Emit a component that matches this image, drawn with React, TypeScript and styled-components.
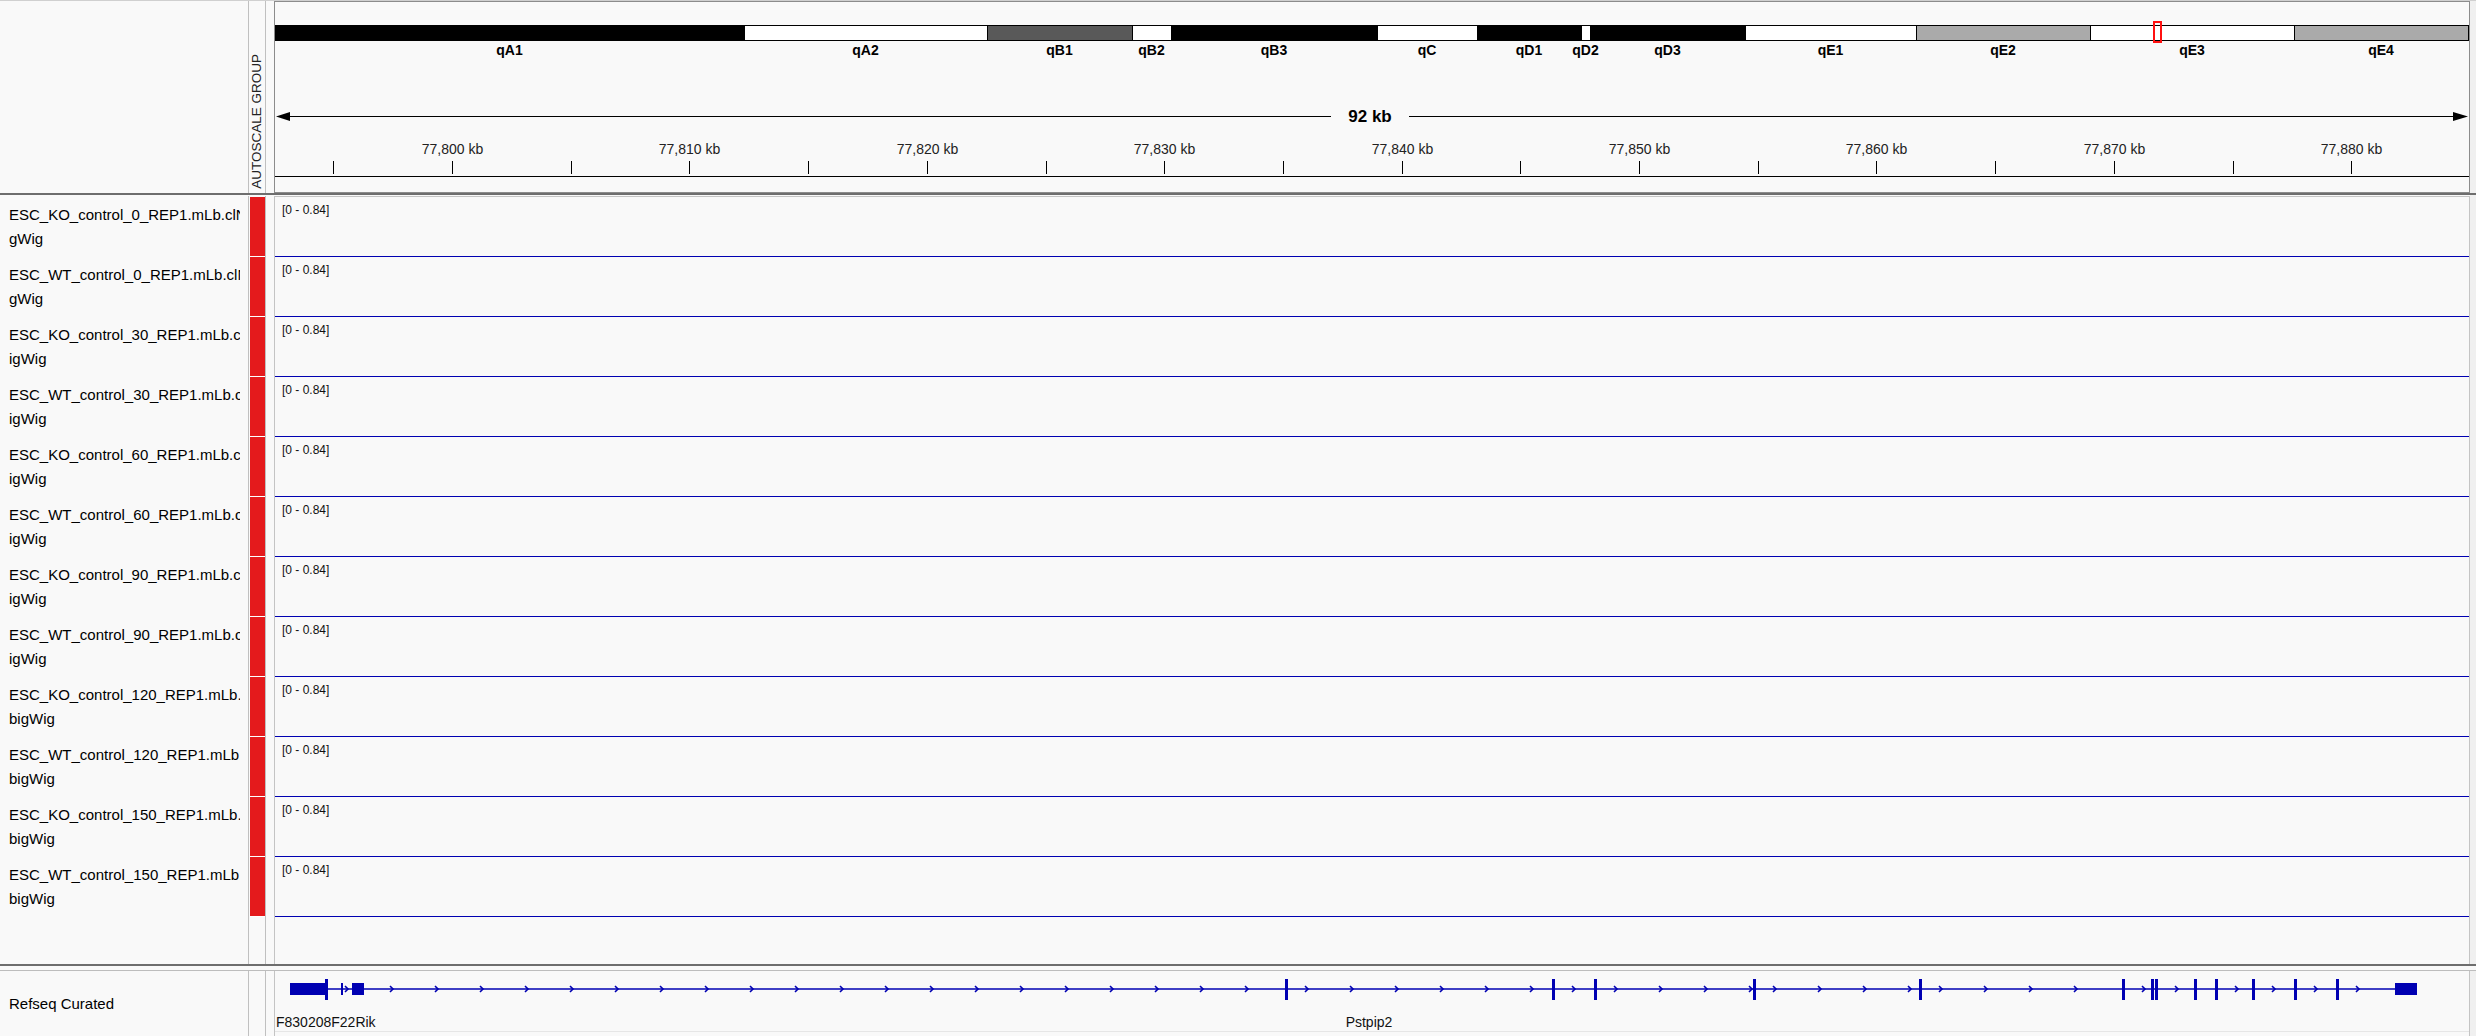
import styled, { createGlobalStyle } from "styled-components"

const BLUE = "#0000b2"
const RED = "#e41a1c"

const GlobalStyle = createGlobalStyle`
    html, body {
        margin: 0;
        padding: 0;
        background: #f9f9f9;
    }
    body {
        font-family: "Liberation Sans", Arial, sans-serif;
        color: #000;
    }
`

// track names are wrapped by IGV after 32 characters
const trackNames = [0, 30, 60, 90, 120, 150].flatMap((t) =>
    ["KO", "WT"].map((g) => `ESC_${g}_control_${t}_REP1.mLb.clN.bigWig`)
)

const bands = [
    { name: "qA1", x0: 275, x1: 744, fill: "#000" },
    { name: "qA2", x0: 744, x1: 987, fill: "#fff" },
    { name: "qB1", x0: 987, x1: 1132, fill: "#595959" },
    { name: "qB2", x0: 1132, x1: 1171, fill: "#fff" },
    { name: "qB3", x0: 1171, x1: 1377, fill: "#000" },
    { name: "qC", x0: 1377, x1: 1477, fill: "#fff" },
    { name: "qD1", x0: 1477, x1: 1581, fill: "#000" },
    { name: "qD2", x0: 1581, x1: 1590, fill: "#fff" },
    { name: "qD3", x0: 1590, x1: 1745, fill: "#000" },
    { name: "qE1", x0: 1745, x1: 1916, fill: "#fff" },
    { name: "qE2", x0: 1916, x1: 2090, fill: "#aaa" },
    { name: "qE3", x0: 2090, x1: 2294, fill: "#fff" },
    { name: "qE4", x0: 2294, x1: 2468, fill: "#aaa" },
]

const kbToX = (kb: number) => 452 + (kb - 77800) * 23.74
const ticks: number[] = []
for (let kb = 77795; kb <= 77880; kb += 5) ticks.push(kb)

const tallExons = [1286, 1553, 1595, 1754, 1920, 2123, 2152, 2156, 2195, 2216, 2253, 2295, 2337]
const introns: [number, number][] = [
    [373, 1286], [1288, 1553], [1555, 1595], [1597, 1754], [1756, 1920], [1922, 2123],
    [2125, 2152], [2158, 2195], [2197, 2216], [2218, 2253], [2255, 2295], [2297, 2337], [2339, 2395],
]
const arrows: number[] = [347]
introns.forEach(([a, b]) => {
    for (let x = a + 19; x < b - 2; x += 45) arrows.push(x)
})

function Ideogram() {
    return (
        <svg width="2194" height="190">
            <g transform="translate(-275,-2)">
                {bands.map((b) => (
                    <g key={b.name}>
                        <rect x={b.x0 + 0.5} y={25.5} width={b.x1 - b.x0} height={15} fill={b.fill} stroke="#000" />
                        <text x={(b.x0 + b.x1) / 2} y={55} textAnchor="middle" fontSize="14" fontWeight="bold">
                            {b.name}
                        </text>
                    </g>
                ))}
                <rect x={2154} y={22} width={7} height={20} fill="none" stroke="#ff1010" strokeWidth="2" />

                <line x1={288} y1={116.5} x2={1331} y2={116.5} stroke="#000" />
                <line x1={1409} y1={116.5} x2={2455} y2={116.5} stroke="#000" />
                <polygon points="276,116.5 290,112 290,121" fill="#000" />
                <polygon points="2468,116.5 2453,112 2453,121" fill="#000" />
                <text x={1370} y={122} textAnchor="middle" fontSize="17" fontWeight="bold">92 kb</text>

                {ticks.map((kb) => {
                    const x = Math.round(kbToX(kb)) + 0.5
                    return (
                        <g key={kb}>
                            <line x1={x} y1={161} x2={x} y2={174} stroke="#000" />
                            {kb % 10 === 0 && (
                                <text x={x} y={154} textAnchor="middle" fontSize="14" fill="#222">
                                    {kb.toLocaleString("en-US")} kb
                                </text>
                            )}
                        </g>
                    )
                })}
                <line x1={275} y1={176.5} x2={2469} y2={176.5} stroke="#000" />
            </g>
        </svg>
    )
}

function GeneTrack() {
    return (
        <svg width="2194" height="65">
            <g transform="translate(-275,-971)" fill={BLUE}>
                <line x1={290} y1={989} x2={2416} y2={989} stroke={BLUE} strokeWidth="1.3" />
                <rect x={290} y={983} width={37} height={12} />
                <rect x={325} y={979} width={3} height={21} />
                <rect x={341} y={983} width={2} height={12} />
                <rect x={352} y={983} width={12} height={12} />
                {tallExons.map((x) => (
                    <rect key={x} x={x - 1} y={979} width={3} height={21} />
                ))}
                <rect x={2395} y={983} width={22} height={12} />
                {arrows.map((x) => (
                    <polyline
                        key={x}
                        points={`${x - 2},${986} ${x + 1},${989} ${x - 2},${992}`}
                        fill="none"
                        stroke={BLUE}
                        strokeWidth="1.6"
                    />
                ))}
                <text x={276} y={1027} fontSize="14" fill="#111">F830208F22Rik</text>
                <text x={1369} y={1027} fontSize="14" fill="#111" textAnchor="middle">Pstpip2</text>
                <line x1={275} y1={1031.5} x2={2469} y2={1031.5} stroke="#e6e6e6" />
            </g>
        </svg>
    )
}

function App() {
    return (
        <Page>
            <GlobalStyle />
            <HeaderRow>
                <NameColumn />
                <AutoColumn className="header">
                    <AutoscaleLabel>AUTOSCALE GROUP</AutoscaleLabel>
                </AutoColumn>
                <Gap />
                <DataHeader>
                    <Ideogram />
                </DataHeader>
                <Gutter />
            </HeaderRow>
            <Divider />
            <TracksRow>
                <NameColumn className="tracks">
                    {trackNames.map((n) => (
                        <TrackName key={n}>
                            <span className="line">{n.slice(0, 32)}</span>
                            <span className="line">{n.slice(32)}</span>
                        </TrackName>
                    ))}
                </NameColumn>
                <AutoColumn className="tracks">
                    {trackNames.map((n) => (
                        <AutoscaleMark key={n} />
                    ))}
                </AutoColumn>
                <Gap />
                <DataColumn className="tracks">
                    {trackNames.map((n) => (
                        <SignalRow key={n}>
                            <span className="range">[0 - 0.84]</span>
                        </SignalRow>
                    ))}
                </DataColumn>
                <Gutter />
            </TracksRow>
            <Splitter />
            <FeatureRow>
                <NameColumn className="feature">
                    <FeatureName>Refseq Curated</FeatureName>
                </NameColumn>
                <AutoColumn />
                <Gap />
                <DataColumn>
                    <GeneTrack />
                </DataColumn>
                <Gutter />
            </FeatureRow>
        </Page>
    )
}

const Page = styled.div`
    width: 2476px;
    height: 1036px;
    display: flex;
    flex-direction: column;
    box-sizing: border-box;
    border-top: 1px solid #d0d0d0;
    background: #f9f9f9;
    overflow: hidden;
`

const HeaderRow = styled.div`
    display: flex;
    height: 192px;
    flex: none;
`

const TracksRow = styled.div`
    display: flex;
    height: 769px;
    flex: none;
`

const FeatureRow = styled.div`
    display: flex;
    flex: 1;
    min-height: 0;
`

const Divider = styled.div`
    height: 2px;
    flex: none;
    background: #6e6e6e;
`

const Splitter = styled.div`
    height: 7px;
    flex: none;
    box-sizing: border-box;
    border-top: 2px solid #6e6e6e;
    border-bottom: 1px solid #bdbdbd;
`

const NameColumn = styled.div`
    width: 248px;
    flex: none;
    display: flex;
    flex-direction: column;
    &.tracks {
        padding-top: 2px;
    }
    &.feature {
        justify-content: center;
    }
`

const TrackName = styled.div`
    height: 60px;
    box-sizing: border-box;
    padding: 6px 8px 0 9px;
    display: flex;
    flex-direction: column;
    font-size: 15px;
    line-height: 24px;
    & .line {
        display: block;
        white-space: nowrap;
        overflow: hidden;
    }
`

const FeatureName = styled.div`
    padding-left: 9px;
    font-size: 15px;
`

const AutoColumn = styled.div`
    width: 18px;
    flex: none;
    box-sizing: border-box;
    border-left: 1px solid #c0c0c0;
    border-right: 1px solid #c0c0c0;
    padding-left: 1px;
    display: flex;
    flex-direction: column;
    &.header {
        justify-content: flex-end;
        align-items: center;
        padding: 0 0 4px 0;
    }
    &.tracks {
        margin-top: 1px;
        padding-top: 1px;
    }
`

const AutoscaleLabel = styled.span`
    writing-mode: vertical-rl;
    transform: rotate(180deg);
    font-size: 13.5px;
    line-height: 16px;
    color: #222;
    white-space: nowrap;
`

const AutoscaleMark = styled.div`
    width: 15px;
    height: 60px;
    flex: none;
    box-sizing: border-box;
    background: ${RED};
    border-bottom: 1px solid #fff;
`

const Gap = styled.div`
    width: 8px;
    flex: none;
`

const Gutter = styled.div`
    width: 6px;
    flex: none;
    background: #f0f0f0;
`

const DataHeader = styled.div`
    width: 2196px;
    flex: none;
    box-sizing: border-box;
    border: 1px solid #8c8c8c;
    overflow: hidden;
    & svg {
        display: block;
        font-family: "Liberation Sans", Arial, sans-serif;
    }
`

const DataColumn = styled.div`
    width: 2196px;
    flex: none;
    box-sizing: border-box;
    border-left: 1px solid #c4c4c4;
    border-right: 1px solid #c4c4c4;
    overflow: hidden;
    &.tracks {
        margin-top: 1px;
        border-top: 1px solid #c4c4c4;
    }
    & svg {
        display: block;
        font-family: "Liberation Sans", Arial, sans-serif;
    }
`

const SignalRow = styled.div`
    height: 60px;
    box-sizing: border-box;
    border-bottom: 1px solid ${BLUE};
    padding: 3px 0 0 7px;
    & .range {
        font-size: 12px;
        line-height: 14px;
        color: #111;
    }
`

export default App
